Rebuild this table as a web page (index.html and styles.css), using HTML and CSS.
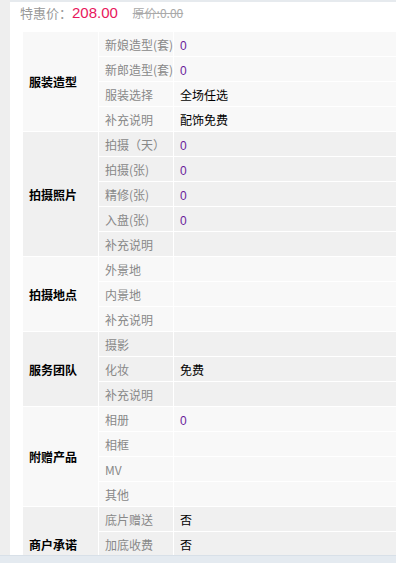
FILE: index.html
```html
<!DOCTYPE html>
<html>
<head>
<meta charset="utf-8">
<title>套系详情</title>
<link rel="stylesheet" href="styles.css">
</head>
<body>
<div class="panel">
<div class="price">
<span class="price-label">特惠价：</span><span class="price-now">208.00</span>
<span class="price-old">原价:0.00</span>
</div>

<table class="detail">
<tbody class="grp odd">
<tr><th rowspan="4">服装造型</th><td class="key">新娘造型(套)</td><td class="val"><span class="num">0</span></td></tr>
<tr><td class="key">新郎造型(套)</td><td class="val"><span class="num">0</span></td></tr>
<tr><td class="key">服装选择</td><td class="val">全场任选</td></tr>
<tr><td class="key">补充说明</td><td class="val">配饰免费</td></tr>
</tbody>
<tbody class="grp even">
<tr><th rowspan="5">拍摄照片</th><td class="key">拍摄（天）</td><td class="val"><span class="num">0</span></td></tr>
<tr><td class="key">拍摄(张)</td><td class="val"><span class="num">0</span></td></tr>
<tr><td class="key">精修(张)</td><td class="val"><span class="num">0</span></td></tr>
<tr><td class="key">入盘(张)</td><td class="val"><span class="num">0</span></td></tr>
<tr><td class="key">补充说明</td><td class="val"></td></tr>
</tbody>
<tbody class="grp odd">
<tr><th rowspan="3">拍摄地点</th><td class="key">外景地</td><td class="val"></td></tr>
<tr><td class="key">内景地</td><td class="val"></td></tr>
<tr><td class="key">补充说明</td><td class="val"></td></tr>
</tbody>
<tbody class="grp even">
<tr><th rowspan="3">服务团队</th><td class="key">摄影</td><td class="val"></td></tr>
<tr><td class="key">化妆</td><td class="val">免费</td></tr>
<tr><td class="key">补充说明</td><td class="val"></td></tr>
</tbody>
<tbody class="grp odd">
<tr><th rowspan="4">附赠产品</th><td class="key">相册</td><td class="val"><span class="num">0</span></td></tr>
<tr><td class="key">相框</td><td class="val"></td></tr>
<tr><td class="key">MV</td><td class="val"></td></tr>
<tr><td class="key">其他</td><td class="val"></td></tr>
</tbody>
<tbody class="grp even">
<tr><th rowspan="3">商户承诺</th><td class="key">底片赠送</td><td class="val">否</td></tr>
<tr><td class="key">加底收费</td><td class="val">否</td></tr>
<tr><td class="key"></td><td class="val"></td></tr>
</tbody>
</table>
</div>
<div class="foot"></div>
</body>
</html>
```

FILE: styles.css
```css
/* package detail sheet */

html, body
{ margin: 0;
  padding: 0;
  overflow: hidden;
}

body
{ background-color: #eeeeee;
  font-family: "Noto Sans CJK SC", "Liberation Sans", sans-serif;
  font-size: 12px;
  color: #000;
}

div.panel
{ margin-left: 10px;
  height: 555px;
  overflow: hidden;
  background-color: #fff;
  border-top: 2px solid #e6eaee;
  box-sizing: border-box;
}

div.foot
{ height: 8px;
  background-color: #e4eaf0;
  border-top: 1px solid #d8e0e8;
}

/* price line */

div.price
{ height: 29px;
  padding-left: 10px;
  line-height: 22px;
  white-space: nowrap;
}

span.price-label
{ color: #999;
  font-size: 13px;
}

span.price-now
{ color: #e8175d;
  font-family: "Liberation Sans", sans-serif;
  font-size: 15px;
  margin-right: 12px;
}

span.price-old
{ color: #aaa;
  font-size: 12px;
  text-decoration: line-through;
}

/* table */

table.detail
{ margin-left: 12px;
  width: 380px;
  border-collapse: collapse;
  table-layout: fixed;
}

table.detail th,
table.detail td
{ border: 1px solid #fff;
  height: 24px;
  padding: 0 0 0 6px;
  text-align: left;
  white-space: nowrap;
}

table.detail th
{ width: 69px;
  font-weight: bold;
  vertical-align: middle;
}

td.key
{ width: 68px;
  color: #888;
}

tbody.odd th,
tbody.odd td
{ background-color: #f8f8f8;
}

tbody.even th,
tbody.even td
{ background-color: #f0f0f0;
}

span.num
{ color: #6a1b9a;
  font-family: "Liberation Sans", sans-serif;
}
```
